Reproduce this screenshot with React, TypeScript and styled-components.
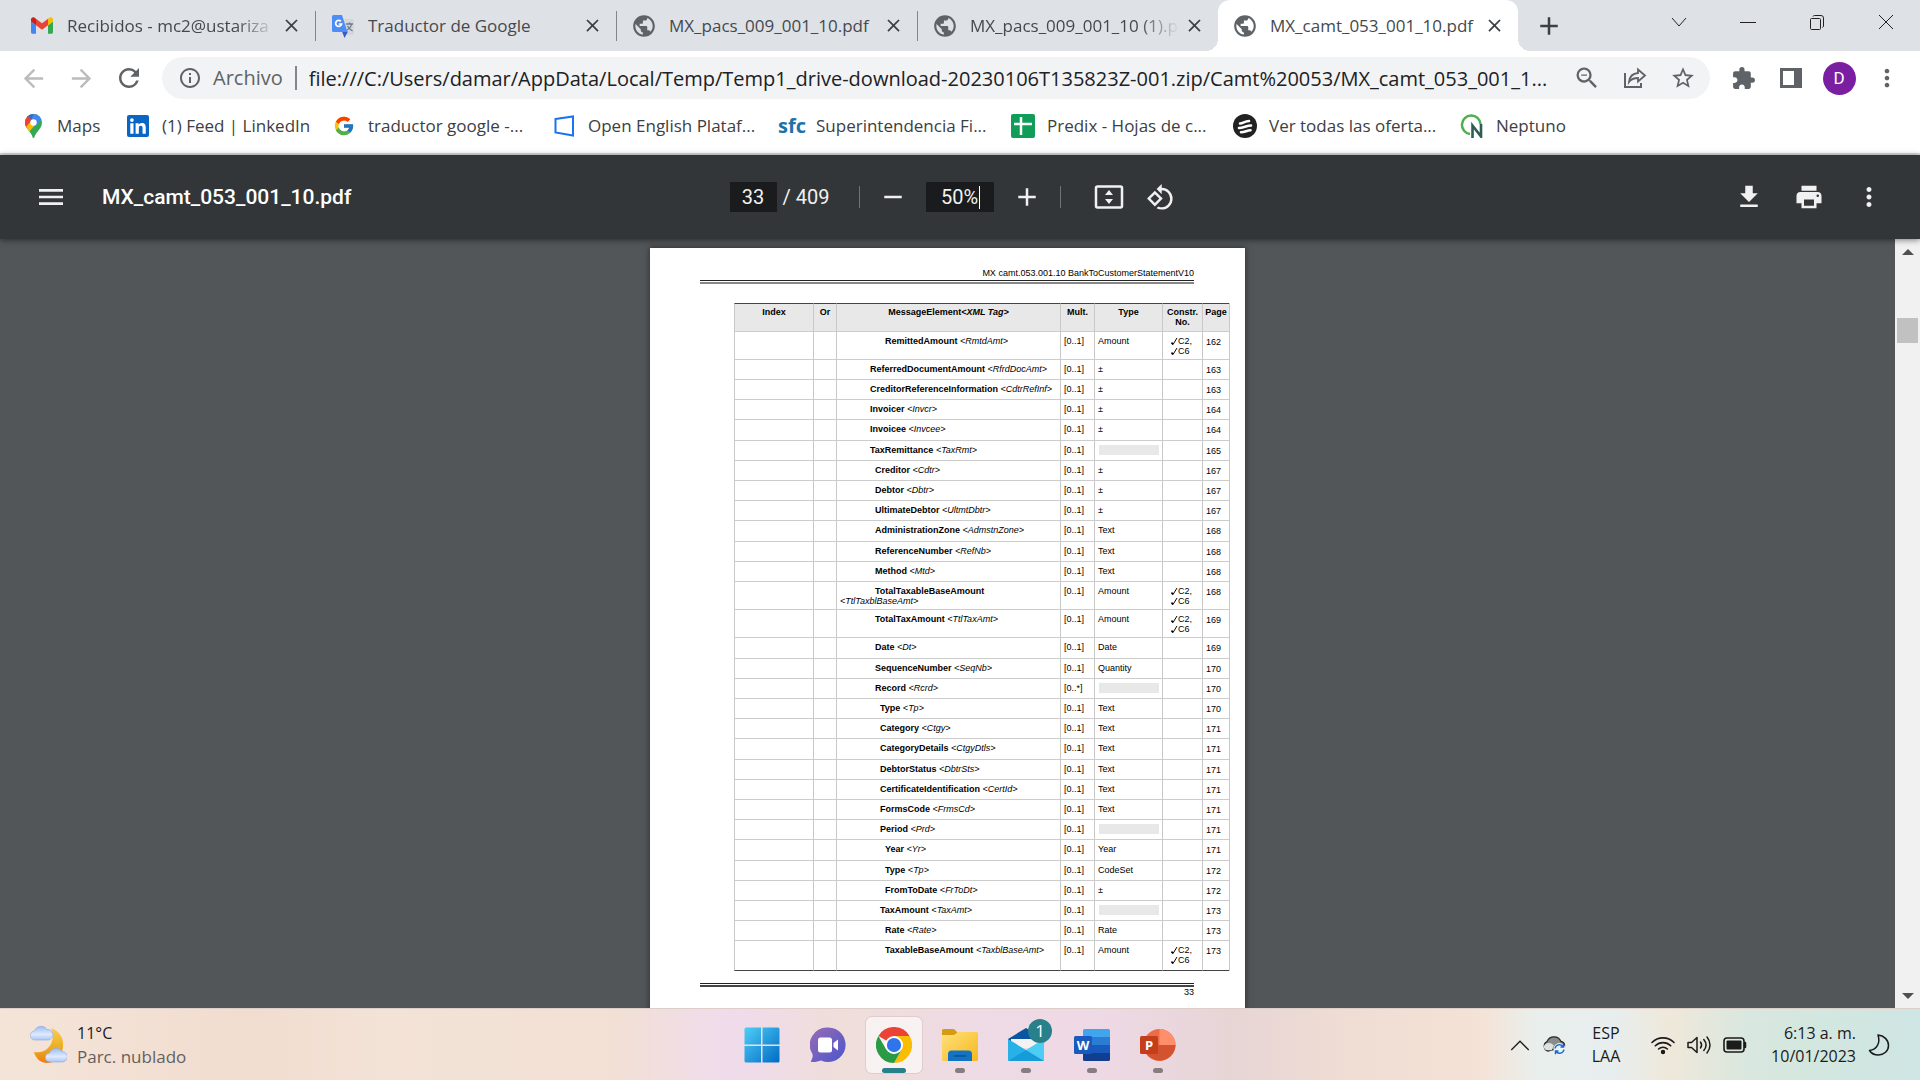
import React from 'react';
import styled, { createGlobalStyle } from 'styled-components';
import {
  MdAdd,
  MdArrowBack,
  MdArrowForward,
  MdClose,
  MdExtension,
  MdInfoOutline,
  MdMenu,
  MdMoreVert,
  MdOutlineZoomOut,
  MdPrint,
  MdPublic,
  MdRefresh,
  MdRemove,
  MdRotate90DegreesCcw,
  MdStarBorder,
} from 'react-icons/md';
import { FcGoogle } from 'react-icons/fc';

const uiFont = '"Open Sans", "Noto Sans", sans-serif';

const GlobalStyle = createGlobalStyle`
  *, *::before, *::after { box-sizing: border-box; }
  body { margin: 0; overflow: hidden; font-family: ${uiFont}; }
  button, input { font: inherit; color: inherit; border: 0; padding: 0; margin: 0; background: none; outline: none; }
  svg { display: block; flex: none; }
`;

const Desktop = styled.div`
  display: grid;
  grid-template-columns: minmax(0, 1fr);
  grid-template-rows: auto auto minmax(0, 1fr) auto;
  height: 100vh;
`;

/* ---------- browser chrome ---------- */

const BrowserTop = styled.header`
  border-bottom: 2px solid #dadce0;
  background: #fff;
`;

const TabStrip = styled.div`
  display: flex;
  align-items: center;
  height: 51px;
  padding-left: 15px;
  background: #dee1e6;
`;

const Tab = styled.div<{ $active?: boolean }>`
  position: relative;
  display: flex;
  align-items: center;
  flex: 0 1 300px;
  min-width: 0;
  height: 51px;
  padding: 0 13px 0 16px;
  gap: 14px;
  color: #45494e;
  font-size: 17px;
  border-radius: 12px 12px 0 0;
  background: ${(p) => (p.$active ? '#fff' : 'transparent')};

  &::before,
  &::after {
    content: '';
    display: ${(p) => (p.$active ? 'block' : 'none')};
    position: absolute;
    bottom: 0;
    width: 12px;
    height: 12px;
  }
  &::before {
    right: 100%;
    background: radial-gradient(circle at 0 0, transparent 12px, #fff 12px);
  }
  &::after {
    left: 100%;
    background: radial-gradient(circle at 100% 0, transparent 12px, #fff 12px);
  }
`;

const TabDivider = styled.span`
  width: 1px;
  height: 30px;
  background: #80868b;
`;

const TabTitle = styled.span<{ $fade?: boolean }>`
  flex: 1;
  min-width: 0;
  white-space: nowrap;
  mask-image: ${(p) =>
    p.$fade ? 'linear-gradient(to right, #000 calc(100% - 44px), transparent calc(100% - 4px))' : 'none'};
`;

const TabIcon = styled.span`
  display: flex;
  width: 22px;
  justify-content: center;
  color: #5f6368;
`;

const CloseButton = styled.button`
  display: grid;
  place-items: center;
  width: 22px;
  height: 24px;
  margin-left: -14px;
  color: #3c4043;
`;

const NewTab = styled.button`
  display: grid;
  place-items: center;
  width: 42px;
  height: 42px;
  margin-left: 10px;
  color: #3c4043;
`;

const WindowControls = styled.div`
  display: flex;
  margin-left: auto;
  align-self: flex-start;
`;

const WindowButton = styled.button`
  display: grid;
  place-items: center;
  width: 69px;
  height: 44px;
  color: #222;
`;

const NavRow = styled.div`
  display: flex;
  align-items: center;
  height: 54px;
  padding: 0 9px;
`;

const IconButton = styled.button<{ $muted?: boolean }>`
  display: grid;
  place-items: center;
  flex: none;
  width: 48px;
  height: 42px;
  color: ${(p) => (p.$muted ? '#babcbe' : '#5f6368')};
`;

const AddressBar = styled.form`
  display: flex;
  align-items: center;
  flex: 1;
  min-width: 0;
  height: 42px;
  margin: 0 9px;
  padding: 0 3px 0 16px;
  border-radius: 21px;
  background: #f1f3f4;
  color: #5f6368;
  font-size: 20px;
`;

const Scheme = styled.label`
  margin-left: 11px;
  padding-right: 12px;
  border-right: 2px solid #80868b;
  line-height: 24px;
`;

const AddressInput = styled.input`
  flex: 1;
  min-width: 0;
  margin: 0 12px;
  color: #202124;
`;

const Avatar = styled.span`
  display: grid;
  place-items: center;
  width: 33px;
  height: 33px;
  border-radius: 50%;
  background: #7b1fa2;
  color: #fff;
  font: 17px Roboto, sans-serif;
`;

const Bookmarks = styled.nav`
  display: flex;
  align-items: center;
  height: 48px;
  padding: 0 0 6px 21px;
`;

const Bookmark = styled.a<{ $width: number }>`
  display: flex;
  align-items: center;
  gap: 12px;
  width: ${(p) => p.$width}px;
  color: #3c4043;
  font-size: 17px;
  line-height: 24px;
  text-decoration: none;
  white-space: nowrap;
`;

const BookmarkIcon = styled.span`
  display: flex;
  justify-content: center;
  width: 24px;
`;

/* ---------- pdf toolbar ---------- */

const PdfToolbar = styled.div`
  position: relative;
  z-index: 1;
  display: grid;
  grid-template-columns: 1fr auto 1fr;
  align-items: center;
  height: 84px;
  padding: 0 27px 0 24px;
  background: #323639;
  box-shadow: 0 1px 6px rgba(0, 0, 0, 0.5);
  color: #f1f1f1;
  font-family: Roboto, sans-serif;
  font-size: 20px;
`;

const PdfGroup = styled.div<{ $end?: boolean }>`
  display: flex;
  align-items: center;
  gap: ${(p) => (p.$end ? 12 : 0)}px;
  justify-content: ${(p) => (p.$end ? 'flex-end' : 'flex-start')};
`;

const PdfTitle = styled.h1`
  margin: 0 0 0 24px;
  color: #fff;
  font-size: 21px;
  font-weight: 500;
`;

const PdfButton = styled.button<{ $narrow?: boolean }>`
  display: grid;
  place-items: center;
  width: ${(p) => (p.$narrow ? 54 : 48)}px;
  height: 48px;
`;

const FitButton = styled(PdfButton)`
  margin-left: 18px;
`;

const PageInput = styled.input`
  width: 47px;
  height: 30px;
  background: #191b1c;
  text-align: center;
`;

const PageTotal = styled.span`
  margin: 0 24px 0 6px;
`;

const ToolDivider = styled.span`
  width: 1px;
  height: 22px;
  margin: 0 6px;
  background: #6f7274;
`;

const ZoomField = styled.label`
  display: flex;
  align-items: center;
  justify-content: center;
  width: 68px;
  height: 30px;
  margin: 0 6px;
  background: #191b1c;
`;

const ZoomInput = styled.input`
  width: 38px;
`;

const Caret = styled.span`
  width: 1px;
  height: 23px;
  background: #fff;
`;

/* ---------- pdf viewer ---------- */

const Viewer = styled.main`
  display: flex;
  min-height: 0;
  overflow: hidden;
  background: #525659;
`;

const PageArea = styled.div`
  display: flex;
  flex: 1;
  justify-content: center;
  align-items: flex-start;
  padding-top: 9px;
`;

const Sheet = styled.article`
  width: 595px;
  min-height: 842px;
  padding: 20px 51px 0 50px;
  background: #fff;
  box-shadow: 0 0 6px rgba(0, 0, 0, 0.5);
  color: #000;
  font: 9px/10px "Liberation Sans", Arial, sans-serif;
`;

const RunningText = styled.div`
  text-align: right;
`;

const Rule = styled.div<{ $dark?: boolean }>`
  height: 4px;
  margin-top: 2px;
  border-top: 1px solid #222;
  border-bottom: 2px solid ${(p) => (p.$dark ? '#444' : '#888')};
`;

const TagTable = styled.table`
  width: 496px;
  margin: 19px 0 12px 34px;
  border-collapse: separate;
  border-spacing: 0;
  border-right: 1px solid #c8c8c8;
  table-layout: fixed;

  th {
    height: 29px;
    padding: 3px 0 0;
    vertical-align: top;
    border-top: 1px solid #444;
    border-bottom: 1px solid #ccc;
    border-left: 1px solid #c8c8c8;
    background: #e8e8e8;
  }
  td {
    height: 20px;
    padding: 4px 0 3px 3px;
    vertical-align: top;
    border-bottom: 1px solid #ccc;
    border-left: 1px solid #c8c8c8;
  }
  tr:nth-child(5n) td {
    height: 21px;
  }
  tr:last-child td {
    height: 30px;
    border-bottom: 1px solid #444;
  }
`;

const ElementCell = styled.td<{ $level: number }>`
  text-indent: ${(p) => 30 + p.$level * 5}px;
`;

const PageCell = styled.td`
  && {
    padding-top: 5px;
    padding-bottom: 2px;
  }
`;

const Constraint = styled.div`
  display: flex;
  align-items: center;
  padding-left: 5px;
`;

const GreyBlock = styled.div`
  width: 60px;
  height: 10px;
  margin-left: 1px;
  background: #e8e8e8;
`;

const ScrollTrack = styled.div`
  display: flex;
  flex-direction: column;
  align-items: center;
  width: 25px;
  background: #f1f1f1;
  color: #505050;
`;

const ScrollArrow = styled.button`
  display: grid;
  place-items: center;
  width: 25px;
  height: 25px;
`;

const ScrollThumb = styled.div`
  width: 21px;
  height: 25px;
  margin: 54px 0 auto;
  background: #c1c1c1;
`;

/* ---------- windows taskbar ---------- */

const Taskbar = styled.footer`
  display: grid;
  grid-template-columns: 1fr auto 1fr;
  align-items: center;
  height: 72px;
  border-top: 1px solid #dccfca;
  background: linear-gradient(
    to right,
    #f4e4d8 0%,
    #f1ddd0 13%,
    #f3e2d6 20%,
    #f2e0d5 32%,
    #f0dbec 38%,
    #efdeda 44%,
    #eedbe4 50%,
    #eed9e6 57%,
    #e7d5d6 64%,
    #efdcd3 70%,
    #f5e2d6 77%,
    #e9efec 80%,
    #e7eeee 84%,
    #efe8da 87%,
    #d9e7df 91%,
    #d2e7df 95%,
    #cfe5e4 100%
  );
`;

const Weather = styled.button`
  display: flex;
  align-items: center;
  gap: 10px;
  padding-left: 30px;
  font-size: 16px;
  line-height: 24px;
  text-align: left;
  color: #1b1b1b;

  small {
    display: block;
    font-size: 17px;
    color: #665f5c;
  }
`;

const Apps = styled.div`
  display: flex;
  gap: 10px;
`;

const AppButton = styled.button<{ $active?: boolean }>`
  position: relative;
  display: grid;
  place-items: center;
  width: 56px;
  height: 56px;
  border-radius: 6px;
  background: ${(p) => (p.$active ? 'rgba(255,255,255,.6)' : 'transparent')};
  box-shadow: ${(p) => (p.$active ? '0 0 0 1px rgba(120,90,100,.12)' : 'none')};
`;

const Indicator = styled.span<{ $active?: boolean }>`
  position: absolute;
  bottom: 0;
  left: 50%;
  width: ${(p) => (p.$active ? 24 : 10)}px;
  height: 5px;
  border-radius: 3px;
  transform: translateX(-50%);
  background: ${(p) => (p.$active ? '#27808a' : '#877c80')};
`;

const Badge = styled.span`
  position: absolute;
  top: 2px;
  right: 2px;
  display: grid;
  place-items: center;
  width: 24px;
  height: 24px;
  border-radius: 50%;
  background: #27808a;
  color: #fff;
  font-size: 17px;
  line-height: 24px;
`;

const Tray = styled.div`
  display: flex;
  align-items: center;
  justify-content: flex-end;
  gap: 12px;
  padding-right: 30px;
  color: #1b1b1b;
  font-size: 16px;
  line-height: 23px;
`;

const TrayButton = styled.button`
  display: grid;
  justify-items: center;
`;

const Language = styled(TrayButton)`
  width: 56px;
  margin-right: 5px;
`;

const Clock = styled.button`
  width: 97px;
  text-align: right;
`;

/* ---------- drawings ---------- */

const GmailLogo = () => (
  <svg width="22" height="17" viewBox="52 42 88 66">
    <path fill="#4285f4" d="M58 108h14V74L52 59v43c0 3.32 2.69 6 6 6" />
    <path fill="#34a853" d="M120 108h14c3.32 0 6-2.69 6-6V59l-20 15" />
    <path fill="#fbbc04" d="M120 48v26l20-15v-8c0-7.42-8.47-11.65-14.4-7.2" />
    <path fill="#ea4335" d="M72 74V48l24 18 24-18v26L96 92" />
    <path fill="#c5221f" d="M52 51v8l20 15V48l-5.6-4.2c-5.94-4.45-14.4-.22-14.4 7.2" />
  </svg>
);

const TranslateLogo = () => (
  <svg width="24" height="24" viewBox="0 0 24 24">
    <path fill="#d3d7dc" d="M10 5h11.500a1.500 1.500 0 0 1 1.500 1.500v13a1.500 1.500 0 0 1-1.500 1.500H14z" />
    <path fill="none" stroke="#6b7a8a" strokeWidth="1.300" d="M15 10h7M18.500 8.500V10M20.500 10c-.5 3-2.500 5-4.500 6M16.500 12c1 2 3 4 5 5" />
    <path fill="#3a5bc0" d="M11 17.500h6L13.500 24z" />
    <path fill="#4e8df5" d="M2.500 1H11l5.500 17H2.500A1.500 1.500 0 0 1 1 16.500v-14A1.500 1.500 0 0 1 2.500 1z" />
    <path fill="none" stroke="#fff" strokeWidth="1.700" d="M9.800 7.300A3 3 0 1 0 10.600 10H7.800" />
  </svg>
);

const MapsPin = () => (
  <svg width="17" height="24" viewBox="0 0 17 24">
    <defs>
      <clipPath id="pin">
        <path d="M8.500 0A8.500 8.500 0 0 0 0 8.500c0 4 2.200 6 4.500 9.200 1.800 2.500 2.500 3.300 3.100 5.500.3 1.100 1.500 1.100 1.800 0 .6-2.200 1.300-3 3.100-5.500C14.800 14.500 17 12.500 17 8.500A8.500 8.500 0 0 0 8.500 0z" />
      </clipPath>
    </defs>
    <g clipPath="url(#pin)">
      <path fill="#34a853" d="M0 0h17v24H0z" />
      <path fill="#fbbc04" d="M0 17 17-3-3 4v14l4 1z" />
      <path fill="#4285f4" d="M5 7 10-1h8v5L8 14z" />
      <path fill="#ea4335" d="M-1 12V-1h5l4.500 8L2 14z" />
      <path fill="#1a73e8" d="M1 2 8-1h2L5.500 6.500z" />
      <path fill="#ea4335" d="M0 4.500 2.500 1.500 7 6 1.500 12 0 11z" />
      <path fill="#fbbc04" d="M1 13 6.500 6.500 11 10 4 18z" />
    </g>
    <circle cx="8.500" cy="8.500" r="3.200" fill="#fff" />
  </svg>
);

const LinkedInLogo = () => (
  <svg width="22" height="22" viewBox="0 0 22 22">
    <rect width="22" height="22" rx="2" fill="#0a66c2" />
    <path fill="#fff" d="M3.300 8.300h3.200v10.400H3.300zM4.900 3.200a1.850 1.850 0 1 1 0 3.700 1.850 1.850 0 0 1 0-3.700zM8.600 8.300h3v1.500c.6-1 1.700-1.750 3.300-1.750 3.200 0 3.850 2.100 3.850 4.850v5.800h-3.200v-5.200c0-1.200 0-2.800-1.700-2.800s-2 1.300-2 2.700v5.300H8.600z" />
  </svg>
);

const DoorLogo = () => (
  <svg width="22" height="22" viewBox="0 0 22 22">
    <path fill="none" stroke="#1a73f0" strokeWidth="2" d="M2.500 4 20 1.500v19L2.500 17.500z" />
  </svg>
);

const SfcMark = styled.b`
  color: #1c72ad;
  font-size: 20px;
  line-height: 24px;
`;

const SheetLogo = () => (
  <svg width="24" height="24" viewBox="0 0 24 24">
    <rect width="24" height="24" rx="2" fill="#0f9d58" />
    <path fill="none" stroke="#fff" strokeWidth="2.500" d="M10 3v18M3 10h18" />
  </svg>
);

const StripesLogo = () => (
  <svg width="24" height="24" viewBox="0 0 24 24">
    <circle cx="12" cy="12" r="12" fill="#222" />
    <path fill="none" stroke="#fff" strokeWidth="2.600" strokeLinecap="round" d="M7 9.500C10 9.500 12 7 16 7M6 14c4 0 8-2.500 12-2.500M8 18.200c4 0 6-2 9.500-2" />
  </svg>
);

const NeptunoLogo = () => (
  <svg width="24" height="24" viewBox="0 0 24 24">
    <path fill="none" stroke="#4caf50" strokeWidth="2.500" d="M10 20A9.300 9.300 0 1 1 20.500 10" />
    <path fill="none" stroke="#2f5d55" strokeWidth="2.600" d="M12.500 24V11.500L21 22.500V10" />
  </svg>
);

const ShareIcon = () => (
  <svg width="24" height="24" viewBox="0 0 24 24" fill="none" stroke="currentColor" strokeWidth="2">
    <path d="M2 7v14h16v-4" />
    <path d="M15 3.500 22 9.500l-7 6V12c-4 0-7 1.200-9 4 .5-5 3.500-8.500 9-9z" strokeWidth="1.800" />
  </svg>
);

const SidePanelIcon = () => (
  <svg width="22" height="22" viewBox="0 0 22 22">
    <path fill="currentColor" fillRule="evenodd" d="M0 1h22v20H0zM3 4v14h11V4z" />
  </svg>
);

const FitIcon = () => (
  <svg width="30" height="30" viewBox="0 0 30 30">
    <rect x="2" y="4.500" width="26" height="21" rx="1.500" fill="none" stroke="currentColor" strokeWidth="2.500" />
    <path fill="currentColor" d="M15 8l4 5h-8zM15 22l4-5h-8z" />
  </svg>
);

const DownloadIcon = () => (
  <svg width="30" height="30" viewBox="0 0 24 24">
    <path fill="currentColor" d="M19 9h-4V3H9v6H5l7 7 7-7zM5 18v2h14v-2H5z" />
  </svg>
);

const WeatherIcon = () => (
  <svg width="37" height="42" viewBox="0 0 37 42">
    <defs>
      <linearGradient id="moon" x1="0" y1="0" x2="0" y2="1">
        <stop offset="0" stopColor="#f9cf52" />
        <stop offset=".6" stopColor="#eca920" />
        <stop offset="1" stopColor="#f07d10" />
      </linearGradient>
      <linearGradient id="cloud" x1="0" y1="0" x2="0" y2="1">
        <stop offset="0" stopColor="#9cbdf2" />
        <stop offset=".6" stopColor="#dfeaff" />
        <stop offset="1" stopColor="#a9c6f5" />
      </linearGradient>
    </defs>
    <path fill="url(#moon)" d="M21 4c8 3 13 9 12 19-1 10-8 16-16 16-6 0-11-4-13-11 5 1 10 0 14-4 5-5 6-12 3-20z" />
    <path fill="url(#cloud)" stroke="#86abe8" strokeWidth=".6" d="M5 16a4.500 4.500 0 0 1-.5-9A7 7 0 0 1 17 5.500 5 5 0 0 1 18 16z" />
    <path fill="url(#cloud)" stroke="#86abe8" strokeWidth=".6" d="M20 38a4.500 4.500 0 0 1-.5-9A7 7 0 0 1 32 27.500 5 5 0 0 1 32 38z" />
  </svg>
);

const StartIcon = () => (
  <svg width="36" height="36" viewBox="0 0 36 36">
    <defs>
      <linearGradient id="win" gradientUnits="userSpaceOnUse" x1="0" y1="0" x2="36" y2="36">
        <stop offset="0" stopColor="#4fd0f8" />
        <stop offset="1" stopColor="#0069c4" />
      </linearGradient>
    </defs>
    <path fill="url(#win)" d="M2 .5h15v17H.5V2A1.500 1.500 0 0 1 2 .5zM18.500.5H34A1.500 1.500 0 0 1 35.500 2v15.500h-17zM.5 19H17v16.500H2A1.500 1.500 0 0 1 .5 34zM18.500 19h17v15a1.500 1.500 0 0 1-1.500 1.500H18.500z" />
  </svg>
);

const ChatIcon = () => (
  <svg width="36" height="36" viewBox="0 0 36 36">
    <defs>
      <linearGradient id="chat" x1="0" y1="0" x2="1" y2="1">
        <stop offset="0" stopColor="#9a6bb5" />
        <stop offset="1" stopColor="#4a56cc" />
      </linearGradient>
    </defs>
    <path fill="url(#chat)" d="M18 .5a17.300 17.300 0 1 1-7 33c-2.500 1-6 1.800-9.500 1.500C.5 35 1 34 1.500 33c1-2 1.500-3.500 1-6A17.300 17.300 0 0 1 18 .5z" />
    <rect x="8" y="10.500" width="14" height="15" rx="2.500" fill="#fff" />
    <path fill="#fff" d="M23.500 16 28 12.500v11L23.500 20z" />
  </svg>
);

const ChromeIcon = () => (
  <svg width="36" height="36" viewBox="0 0 48 48">
    <path fill="#ea4335" d="M24 24 3.200 12A24 24 0 0 1 44.800 12z" />
    <path fill="#fbbc04" d="M24 12h20.800A24 24 0 0 1 24 48l10.400-18z" />
    <path fill="#2a9a45" d="M3.200 12 13.600 30 24 36l10.400-6L24 48A24 24 0 0 1 3.200 12z" />
    <circle cx="24" cy="24" r="12" fill="#fff" />
    <circle cx="24" cy="24" r="9.500" fill="#2f74ea" />
  </svg>
);

const FolderIcon = () => (
  <svg width="36" height="36" viewBox="0 0 36 36">
    <defs>
      <linearGradient id="folder" x1="0" y1="0" x2="1" y2="1">
        <stop offset="0" stopColor="#ffe07c" />
        <stop offset="1" stopColor="#f5b91c" />
      </linearGradient>
    </defs>
    <path fill="#d59b12" d="M0 8V3.500A1.500 1.500 0 0 1 1.500 2H12l4 4h5v4H0z" />
    <path fill="url(#folder)" d="M0 8h12l4-3h18.500A1.500 1.500 0 0 1 36 6.500v26a1.500 1.500 0 0 1-1.500 1.500h-33A1.500 1.500 0 0 1 0 32.500z" />
    <path fill="#1273c4" d="M6 34v-7a3.500 3.500 0 0 1 3.500-3.500h17A3.500 3.500 0 0 1 30 27v7z" />
    <path stroke="#0b4f91" strokeWidth="1.500" d="M12 29h12" />
  </svg>
);

const MailIcon = () => (
  <svg width="36" height="36" viewBox="0 0 36 36">
    <path fill="#0b55a0" d="M0 12 18 1l18 11v8H0z" />
    <path fill="#f3f3f3" d="M3 12h30v9H3z" />
    <path fill="#28b1e8" d="M0 12l36 22H1.500A1.500 1.500 0 0 1 0 32.500z" />
    <path fill="#4ccdf5" d="M36 12 18 23l18 11z" />
    <path fill="#159bd7" d="M0 34 18 23l18 11z" />
  </svg>
);

const LetterTile = styled.text`
  font: 700 13px "Open Sans", sans-serif;
  fill: #fff;
`;

const WordIcon = () => (
  <svg width="36" height="36" viewBox="0 0 36 36">
    <path fill="#41a5ee" d="M9 3.500A1.500 1.500 0 0 1 10.500 2h24A1.500 1.500 0 0 1 36 3.500V10H9z" />
    <path fill="#2b7cd3" d="M9 10h27v8H9z" />
    <path fill="#185abd" d="M9 18h27v8H9z" />
    <path fill="#103f91" d="M9 26h27v6.500a1.500 1.500 0 0 1-1.500 1.500h-24A1.500 1.500 0 0 1 9 32.500z" />
    <rect y="9" width="18" height="18" rx="1.500" fill="#185abd" />
    <LetterTile x="9" y="23" textAnchor="middle">W</LetterTile>
  </svg>
);

const PowerPointIcon = () => (
  <svg width="36" height="36" viewBox="0 0 36 36">
    <circle cx="19.500" cy="18" r="16" fill="#ed6c47" />
    <path fill="#ff8f6b" d="M19.500 2a16 16 0 0 1 16 16h-16z" />
    <path fill="#d35230" d="M35.500 18a16 16 0 0 1-31 5l15-5z" />
    <rect y="9" width="18" height="18" rx="1.500" fill="#c43e1c" />
    <LetterTile x="9" y="23" textAnchor="middle">P</LetterTile>
  </svg>
);

const CloudSyncIcon = () => (
  <svg width="24" height="24" viewBox="0 0 24 24">
    <path fill="#8b8b8b" stroke="#2b2b2b" strokeWidth="1.300" d="M6 18a5 5 0 0 1-1-9.300A7.500 7.500 0 0 1 19 8.500a4.500 4.500 0 0 1 3.500 5z" />
    <path fill="#dfe0e0" d="M1.800 13.500c1-4 7-5 10-1l-2 4.800H5.500c-2 0-3.700-1.800-3.700-3.800z" />
    <circle cx="17.500" cy="16" r="6" fill="#eef3f5" />
    <path fill="none" stroke="#1b6ac9" strokeWidth="1.500" d="M13 15.500a4.500 4.500 0 0 1 8-2M22 16.500a4.500 4.500 0 0 1-8 2M21.500 10.800V14h-3M13.500 21.200V18h3" />
  </svg>
);

const WifiIcon = () => (
  <svg width="24" height="24" viewBox="0 0 24 24" fill="none" stroke="currentColor" strokeWidth="1.600" strokeLinecap="round">
    <path d="M1 9.500a15.500 15.500 0 0 1 22 0M4.300 12.800a11 11 0 0 1 15.400 0M7.600 16a6.300 6.300 0 0 1 8.800 0" />
    <circle cx="12" cy="19" r="1.400" fill="currentColor" />
  </svg>
);

const VolumeIcon = () => (
  <svg width="24" height="24" viewBox="0 0 24 24" fill="none" stroke="currentColor" strokeWidth="1.500" strokeLinecap="round" strokeLinejoin="round">
    <path d="M1 9.500h3.500L10 4.500v15l-5.500-5H1zM13.500 9c1.300 1.800 1.300 4.200 0 6M16.800 6.500c2.700 3.300 2.700 7.700 0 11M20 4c4 4.700 4 11.300 0 16" />
  </svg>
);

const BatteryIcon = () => (
  <svg width="24" height="24" viewBox="0 0 24 24">
    <rect x="1" y="5" width="20" height="14" rx="3" fill="none" stroke="currentColor" strokeWidth="1.600" />
    <rect x="3.500" y="7.500" width="15" height="9" rx="1" fill="currentColor" />
    <path d="M22 10v4" stroke="currentColor" strokeWidth="2.500" strokeLinecap="round" />
  </svg>
);

const MoonIcon = () => (
  <svg width="22" height="22" viewBox="0 0 22 22" fill="none" stroke="currentColor" strokeWidth="1.500" strokeLinejoin="round">
    <path d="M10 1c6 .5 10.500 5 10.500 10.500S16 21 10.500 21C6.500 21 3 19 1.500 16.500 9 15.500 12.500 9 10 1z" />
  </svg>
);

const Stroke = ({ d, size = 16 }: { d: string; size?: number }) => (
  <svg width={size} height={size} viewBox="0 0 16 16" fill="none" stroke="currentColor">
    <path d={d} />
  </svg>
);

const CheckMark = () => (
  <svg width="7" height="8" viewBox="0 0 7 8" fill="none" stroke="currentColor">
    <path strokeWidth="1.600" d="M.5 5.500 2 7.500" />
    <path strokeWidth="1" d="M2 7.500 6 1" />
  </svg>
);

/* ---------- data ---------- */

const globe = <MdPublic size={26} />;

const tabs = [
  { title: 'Recibidos - mc2@ustariza', icon: <GmailLogo />, fade: true },
  { title: 'Traductor de Google', icon: <TranslateLogo /> },
  { title: 'MX_pacs_009_001_10.pdf', icon: globe },
  { title: 'MX_pacs_009_001_10 (1).p', icon: globe, fade: true },
  { title: 'MX_camt_053_001_10.pdf', icon: globe, active: true },
];

const bookmarks = [
  { label: 'Maps', icon: <MapsPin />, width: 105 },
  { label: '(1) Feed | LinkedIn', icon: <LinkedInLogo />, width: 206 },
  { label: 'traductor google -...', icon: <FcGoogle size={22} />, width: 220 },
  { label: 'Open English Plataf...', icon: <DoorLogo />, width: 228 },
  { label: 'Superintendencia Fi...', icon: <SfcMark>sfc</SfcMark>, width: 231 },
  { label: 'Predix - Hojas de c...', icon: <SheetLogo />, width: 222 },
  { label: 'Ver todas las oferta...', icon: <StripesLogo />, width: 227 },
  { label: 'Neptuno', icon: <NeptunoLogo />, width: 150 },
];

type Row = [level: number, name: string, tag: string, type: string, page: number, mult?: string];

const rows: Row[] = [
  [3, 'RemittedAmount', 'RmtdAmt', 'Amount', 162],
  [0, 'ReferredDocumentAmount', 'RfrdDocAmt', '±', 163],
  [0, 'CreditorReferenceInformation', 'CdtrRefInf', '±', 163],
  [0, 'Invoicer', 'Invcr', '±', 164],
  [0, 'Invoicee', 'Invcee', '±', 164],
  [0, 'TaxRemittance', 'TaxRmt', '', 165],
  [1, 'Creditor', 'Cdtr', '±', 167],
  [1, 'Debtor', 'Dbtr', '±', 167],
  [1, 'UltimateDebtor', 'UltmtDbtr', '±', 167],
  [1, 'AdministrationZone', 'AdmstnZone', 'Text', 168],
  [1, 'ReferenceNumber', 'RefNb', 'Text', 168],
  [1, 'Method', 'Mtd', 'Text', 168],
  [1, 'TotalTaxableBaseAmount', 'TtlTaxblBaseAmt', 'Amount', 168],
  [1, 'TotalTaxAmount', 'TtlTaxAmt', 'Amount', 169],
  [1, 'Date', 'Dt', 'Date', 169],
  [1, 'SequenceNumber', 'SeqNb', 'Quantity', 170],
  [1, 'Record', 'Rcrd', '', 170, '[0..*]'],
  [2, 'Type', 'Tp', 'Text', 170],
  [2, 'Category', 'Ctgy', 'Text', 171],
  [2, 'CategoryDetails', 'CtgyDtls', 'Text', 171],
  [2, 'DebtorStatus', 'DbtrSts', 'Text', 171],
  [2, 'CertificateIdentification', 'CertId', 'Text', 171],
  [2, 'FormsCode', 'FrmsCd', 'Text', 171],
  [2, 'Period', 'Prd', '', 171],
  [3, 'Year', 'Yr', 'Year', 171],
  [3, 'Type', 'Tp', 'CodeSet', 172],
  [3, 'FromToDate', 'FrToDt', '±', 172],
  [2, 'TaxAmount', 'TaxAmt', '', 173],
  [3, 'Rate', 'Rate', 'Rate', 173],
  [3, 'TaxableBaseAmount', 'TaxblBaseAmt', 'Amount', 173],
];

const columnWidths = [79, 23, 224, 34, 68, 40, 27];

const apps = [
  { name: 'Inicio', icon: <StartIcon /> },
  { name: 'Chat', icon: <ChatIcon /> },
  { name: 'Chrome', icon: <ChromeIcon />, running: true, active: true },
  { name: 'Explorador', icon: <FolderIcon />, running: true },
  { name: 'Correo', icon: <MailIcon />, running: true, badge: '1' },
  { name: 'Word', icon: <WordIcon />, running: true },
  { name: 'PowerPoint', icon: <PowerPointIcon />, running: true },
];

const url =
  'file:///C:/Users/damar/AppData/Local/Temp/Temp1_drive-download-20230106T135823Z-001.zip/Camt%20053/MX_camt_053_001_1...';

export default function App() {
  return (
    <Desktop>
      <GlobalStyle />
      <BrowserTop>
        <TabStrip>
          {tabs.map((tab, i) => (
            <React.Fragment key={tab.title}>
              <Tab $active={tab.active}>
                <TabIcon>{tab.icon}</TabIcon>
                <TabTitle $fade={tab.fade}>{tab.title}</TabTitle>
                <CloseButton aria-label="Cerrar">
                  <MdClose size={21} />
                </CloseButton>
              </Tab>
              {i < 3 && <TabDivider />}
            </React.Fragment>
          ))}
          <NewTab aria-label="Nueva"><MdAdd size={30} /></NewTab>
          <WindowControls>
            <WindowButton aria-label="Buscar"><Stroke d="M1 4l7 8 7-8" /></WindowButton>
            <WindowButton aria-label="Minimizar"><Stroke d="M0 8.500h16" /></WindowButton>
            <WindowButton aria-label="Restaurar">
              <Stroke d="M2.500 4.500h8a1 1 0 0 1 1 1v9a1 1 0 0 1-1 1h-8a1 1 0 0 1-1-1v-9a1 1 0 0 1 1-1zM4 2.500c.3-1 .8-1 1.500-1H12a2.500 2.500 0 0 1 2.500 2.500v8c0 .8-.5 1-1 1.500" />
            </WindowButton>
            <WindowButton aria-label="Salir"><Stroke d="M1 1l14 14M15 1 1 15" /></WindowButton>
          </WindowControls>
        </TabStrip>

        <NavRow>
          <IconButton $muted aria-label="Atrás"><MdArrowBack size={29} /></IconButton>
          <IconButton $muted aria-label="Adelante"><MdArrowForward size={29} /></IconButton>
          <IconButton aria-label="Recargar"><MdRefresh size={30} /></IconButton>
          <AddressBar>
            <MdInfoOutline size={24} />
            <Scheme htmlFor="address">Archivo</Scheme>
            <AddressInput id="address" readOnly value={url} />
            <IconButton type="button" aria-label="Zoom"><MdOutlineZoomOut size={28} /></IconButton>
            <IconButton type="button" aria-label="Compartir"><ShareIcon /></IconButton>
            <IconButton type="button" aria-label="Favorito"><MdStarBorder size={26} /></IconButton>
          </AddressBar>
          <IconButton aria-label="Extensiones"><MdExtension size={25} /></IconButton>
          <IconButton aria-label="Panel lateral"><SidePanelIcon /></IconButton>
          <IconButton aria-label="Perfil"><Avatar>D</Avatar></IconButton>
          <IconButton aria-label="Menú"><MdMoreVert size={28} /></IconButton>
        </NavRow>

        <Bookmarks>
          {bookmarks.map((b) => (
            <Bookmark key={b.label} href="#" $width={b.width}>
              <BookmarkIcon>{b.icon}</BookmarkIcon>
              {b.label}
            </Bookmark>
          ))}
        </Bookmarks>
      </BrowserTop>

      <PdfToolbar>
        <PdfGroup>
          <PdfButton $narrow aria-label="Menú"><MdMenu size={32} /></PdfButton>
          <PdfTitle>MX_camt_053_001_10.pdf</PdfTitle>
        </PdfGroup>
        <PdfGroup>
          <PageInput aria-label="Página" defaultValue="33" />
          <PageTotal>/ 409</PageTotal>
          <ToolDivider />
          <PdfButton $narrow aria-label="Reducir"><MdRemove size={30} /></PdfButton>
          <ZoomField>
            <ZoomInput aria-label="Zoom" defaultValue="50%" />
            <Caret />
          </ZoomField>
          <PdfButton $narrow aria-label="Ampliar"><MdAdd size={30} /></PdfButton>
          <ToolDivider />
          <FitButton aria-label="Ajustar"><FitIcon /></FitButton>
          <PdfButton $narrow aria-label="Girar"><MdRotate90DegreesCcw size={29} /></PdfButton>
        </PdfGroup>
        <PdfGroup $end>
          <PdfButton aria-label="Descargar"><DownloadIcon /></PdfButton>
          <PdfButton aria-label="Imprimir"><MdPrint size={30} /></PdfButton>
          <PdfButton aria-label="Más"><MdMoreVert size={30} /></PdfButton>
        </PdfGroup>
      </PdfToolbar>

      <Viewer>
        <PageArea>
          <Sheet>
            <RunningText>MX camt.053.001.10 BankToCustomerStatementV10</RunningText>
            <Rule />
            <TagTable>
              <colgroup>
                {columnWidths.map((w, i) => <col key={i} width={w} />)}
              </colgroup>
              <thead>
                <tr>
                  <th>Index</th>
                  <th>Or</th>
                  <th>MessageElement<i>&lt;XML Tag&gt;</i></th>
                  <th>Mult.</th>
                  <th>Type</th>
                  <th>Constr. No.</th>
                  <th>Page</th>
                </tr>
              </thead>
              <tbody>
                {rows.map(([level, name, tag, type, page, mult]) => (
                  <tr key={name + page}>
                    <td />
                    <td />
                    <ElementCell $level={level}><b>{name}</b> <i>&lt;{tag}&gt;</i></ElementCell>
                    <td>{mult ?? '[0..1]'}</td>
                    <td>{type || <GreyBlock />}</td>
                    <td>
                      {type === 'Amount' && (
                        <>
                          <Constraint><CheckMark />C2,</Constraint>
                          <Constraint><CheckMark />C6</Constraint>
                        </>
                      )}
                    </td>
                    <PageCell>{page}</PageCell>
                  </tr>
                ))}
              </tbody>
            </TagTable>
            <Rule $dark />
            <RunningText>33</RunningText>
          </Sheet>
        </PageArea>
        <ScrollTrack>
          <ScrollArrow aria-label="Subir">
            <svg width="12" height="6" viewBox="0 0 12 6"><path fill="currentColor" d="M6 0l6 6H0z" /></svg>
          </ScrollArrow>
          <ScrollThumb />
          <ScrollArrow aria-label="Bajar">
            <svg width="12" height="6" viewBox="0 0 12 6"><path fill="currentColor" d="M6 6L0 0h12z" /></svg>
          </ScrollArrow>
        </ScrollTrack>
      </Viewer>

      <Taskbar>
        <Weather>
          <WeatherIcon />
          <span>11°C<small>Parc. nublado</small></span>
        </Weather>
        <Apps>
          {apps.map((app) => (
            <AppButton key={app.name} aria-label={app.name} $active={app.active}>
              {app.icon}
              {app.badge && <Badge>{app.badge}</Badge>}
              {app.running && <Indicator $active={app.active} />}
            </AppButton>
          ))}
        </Apps>
        <Tray>
          <TrayButton aria-label="Ocultos"><Stroke size={20} d="M1 12l7-7 7 7" /></TrayButton>
          <TrayButton aria-label="OneDrive"><CloudSyncIcon /></TrayButton>
          <Language>
            <span>ESP</span>
            <span>LAA</span>
          </Language>
          <TrayButton aria-label="Red"><WifiIcon /></TrayButton>
          <TrayButton aria-label="Volumen"><VolumeIcon /></TrayButton>
          <TrayButton aria-label="Batería"><BatteryIcon /></TrayButton>
          <Clock>6:13 a. m.<br />10/01/2023</Clock>
          <TrayButton aria-label="Asistente"><MoonIcon /></TrayButton>
        </Tray>
      </Taskbar>
    </Desktop>
  );
}
